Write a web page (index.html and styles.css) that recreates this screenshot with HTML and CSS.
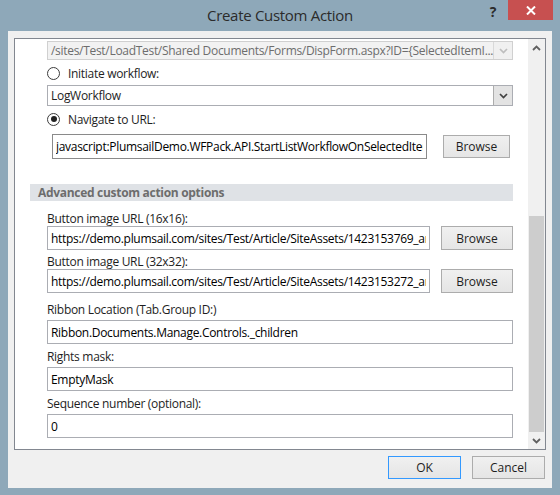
FILE: index.html
```
<!DOCTYPE html>
<html lang="en">
<head>
    <meta charset="UTF-8">
    <title>Create Custom Action</title>
    <link rel="stylesheet" href="styles.css">
</head>
<body>
    <div class="window">
        <div class="titlebar">
            <div class="title-spacer"></div>
            <div class="title">Create Custom Action</div>
            <div class="help">?</div>
            <div class="close">
                <svg width="10" height="9" viewBox="0 0 10 9">
                    <path d="M1 0.5l8 8M9 0.5l-8 8"/>
                </svg>
            </div>
        </div>

        <div class="client">
            <div class="panel">
                <div class="content">
                    <div class="opts">
                        <div class="combo disabled">
                            <span class="combo-text">/sites/Test/LoadTest/Shared Documents/Forms/DispForm.aspx?ID={SelectedItemI...</span>
                            <span class="combo-btn">
                                <svg class="chev" viewBox="0 0 9 6"><path d="M1 1l3.5 3.5L8 1"/></svg>
                            </span>
                        </div>
                        <div class="radio">
                            <span class="radio-dot"></span>
                            <span>Initiate workflow:</span>
                        </div>
                        <div class="combo">
                            <span class="combo-text">LogWorkflow</span>
                            <span class="combo-btn">
                                <svg class="chev" viewBox="0 0 9 6"><path d="M1 1l3.5 3.5L8 1"/></svg>
                            </span>
                        </div>
                        <div class="radio checked">
                            <span class="radio-dot"></span>
                            <span>Navigate to URL:</span>
                        </div>
                        <div class="url-row">
                            <input class="text url" type="text" value="javascript:PlumsailDemo.WFPack.API.StartListWorkflowOnSelectedItem()">
                            <button class="btn url-browse">Browse</button>
                        </div>
                    </div>

                    <div class="section">Advanced custom action options</div>

                    <div class="fields">
                        <div class="field browse">
                            <label>Button image URL (16x16):</label>
                            <div class="browse-row">
                                <input class="text" type="text" value="https://demo.plumsail.com/sites/Test/Article/SiteAssets/1423153769_arrow.png">
                                <button class="btn">Browse</button>
                            </div>
                        </div>
                        <div class="field browse">
                            <label>Button image URL (32x32):</label>
                            <div class="browse-row">
                                <input class="text" type="text" value="https://demo.plumsail.com/sites/Test/Article/SiteAssets/1423153272_arrow.png">
                                <button class="btn">Browse</button>
                            </div>
                        </div>
                        <div class="field after-browse">
                            <label>Ribbon Location (Tab.Group ID:)</label>
                            <input class="text" type="text" value="Ribbon.Documents.Manage.Controls._children">
                        </div>
                        <div class="field">
                            <label>Rights mask:</label>
                            <input class="text" type="text" value="EmptyMask">
                        </div>
                        <div class="field">
                            <label>Sequence number (optional):</label>
                            <input class="text" type="text" value="0">
                        </div>
                    </div>
                </div>

                <div class="scrollbar">
                    <div class="sb-arrow">
                        <svg class="sb-chev" viewBox="0 0 9 6"><path d="M1 5l3.5-3.5L8 5"/></svg>
                    </div>
                    <div class="sb-track">
                        <div class="sb-thumb"></div>
                    </div>
                    <div class="sb-arrow">
                        <svg class="sb-chev" viewBox="0 0 9 6"><path d="M1 1l3.5 3.5L8 1"/></svg>
                    </div>
                </div>
            </div>

            <div class="footer">
                <button class="btn dlg ok">OK</button>
                <button class="btn dlg">Cancel</button>
            </div>
        </div>
    </div>
</body>
</html>
```

FILE: styles.css
```
body {
    margin: 0;
    font-family: "Open Sans", "Noto Sans", sans-serif;
    font-size: 12px;
    letter-spacing: -0.3px;
    color: #1e1e1e;
    background-color: #8ea8b9;
}

.window {
    width: 560px;
    height: 495px;
    background: #8ea8b9;
    display: flex;
    flex-direction: column;
}

/* Title bar */
.titlebar {
    height: 31px;
    display: flex;
    align-items: flex-start;
}

.title-spacer {
    width: 77px;
}

.title {
    flex: 1;
    text-align: center;
    line-height: 31px;
    font-size: 15px;
    color: #2b2b2b;
}

.help {
    width: 20px;
    margin-right: 5px;
    text-align: center;
    line-height: 24px;
    font-size: 14px;
    font-weight: bold;
    color: #2b2b2b;
}

.close {
    width: 45px;
    height: 20px;
    margin-right: 7px;
    background: #c75050;
    display: flex;
    align-items: center;
    justify-content: center;
}

.close svg {
    fill: none;
    stroke: #ffffff;
    stroke-width: 2;
}

/* Client area */
.client {
    margin: 0 8px;
    height: 457px;
    background: #f0f0f0;
    display: flex;
    flex-direction: column;
}

.panel {
    margin: 7px 6px 0 6px;
    height: 410px;
    border: 1px solid #828790;
    background: #ffffff;
    display: flex;
    overflow: hidden;
}

.content {
    flex: 1;
    padding: 0 15px;
    overflow: hidden;
}

.opts,
.fields {
    padding-left: 17px;
}

/* Combo boxes */
.combo {
    height: 19px;
    border: 1px solid #abadb3;
    background: #ffffff;
    display: flex;
    align-items: stretch;
}

.combo.disabled {
    margin-top: 2px;
    height: 17px;
    border-color: #d0d0d0;
    background: #f2f2f2;
    color: #6d6d6d;
}

.radio + .combo {
    margin-top: 4px;
}

.combo-text {
    flex: 1;
    padding-left: 3px;
    line-height: 19px;
    white-space: nowrap;
    overflow: hidden;
}

.combo.disabled .combo-text {
    line-height: 17px;
}

.combo-btn {
    width: 18px;
    border-left: 1px solid #acacac;
    background: #e3e3e3;
    display: flex;
    align-items: center;
    justify-content: center;
}

.combo.disabled .combo-btn {
    border-left-color: #d9d9d9;
    background: #f0f0f0;
}

.chev {
    width: 9px;
    height: 6px;
    fill: none;
    stroke: #404040;
    stroke-width: 1.7;
}

.combo.disabled .chev {
    stroke: #bdbdbd;
}

/* Radios */
.radio {
    height: 16px;
    display: flex;
    align-items: center;
}

.combo + .radio {
    margin-top: 5px;
}

.radio-dot {
    width: 11px;
    height: 11px;
    margin-right: 8px;
    border: 1px solid #3c3c3c;
    border-radius: 50%;
    background: #ffffff;
    display: flex;
    align-items: center;
    justify-content: center;
}

.radio.checked .radio-dot::after {
    content: "";
    width: 6px;
    height: 6px;
    border-radius: 50%;
    background: #222222;
}

/* Text inputs */
.text {
    box-sizing: border-box;
    width: 100%;
    height: 24px;
    margin: 0;
    padding: 0 3px;
    border: 1px solid #abadb3;
    background: #ffffff;
    font-family: inherit;
    font-size: 12px;
    letter-spacing: -0.3px;
    color: #000000;
    outline: none;
}

.url-row {
    margin-top: 7px;
    display: flex;
    align-items: center;
}

.text.url {
    width: 375px;
    height: 25px;
    margin-left: 5px;
    border-color: #8a8a8a;
}

/* Buttons */
.btn {
    box-sizing: border-box;
    height: 23px;
    margin: 0;
    padding: 0;
    border: 1px solid #acacac;
    background: linear-gradient(#f0f0f0, #e5e5e5);
    font-family: inherit;
    font-size: 12px;
    color: #1e1e1e;
}

.url-browse {
    width: 67px;
    margin-left: 16px;
}

/* Section header */
.section {
    margin-top: 25px;
    height: 17px;
    padding-left: 8px;
    line-height: 17px;
    background: #dfe2e6;
    color: #6d6d6d;
    font-weight: bold;
}

/* Fields */
.field {
    margin-top: 5px;
}

.field label {
    display: block;
    height: 15px;
    line-height: 15px;
}

.field > .text {
    margin-top: 3px;
}

.field.browse {
    margin-top: 4px;
}

.fields .field:first-child {
    margin-top: 10px;
}

.field.after-browse {
    margin-top: 9px;
}

.browse-row {
    display: flex;
    align-items: center;
}

.browse-row .text {
    width: 383px;
}

.browse-row .btn {
    width: 72px;
    height: 24px;
    margin-left: 11px;
}

/* Scrollbar */
.scrollbar {
    width: 17px;
    background: #f0f0f0;
    display: flex;
    flex-direction: column;
}

.sb-arrow {
    height: 17px;
    display: flex;
    align-items: center;
    justify-content: center;
}

.sb-chev {
    width: 9px;
    height: 6px;
    fill: none;
    stroke: #606060;
    stroke-width: 1.8;
}

.sb-track {
    flex: 1;
    display: flex;
    flex-direction: column;
    justify-content: flex-end;
    align-items: center;
}

.sb-thumb {
    width: 15px;
    height: 216px;
    background: #cdcdcd;
}

/* Footer */
.footer {
    margin-top: 6px;
    padding-right: 7px;
    display: flex;
    justify-content: flex-end;
    gap: 11px;
}

.btn.dlg {
    width: 73px;
    height: 23px;
}

.btn.ok {
    border-color: #3399ff;
}
```
